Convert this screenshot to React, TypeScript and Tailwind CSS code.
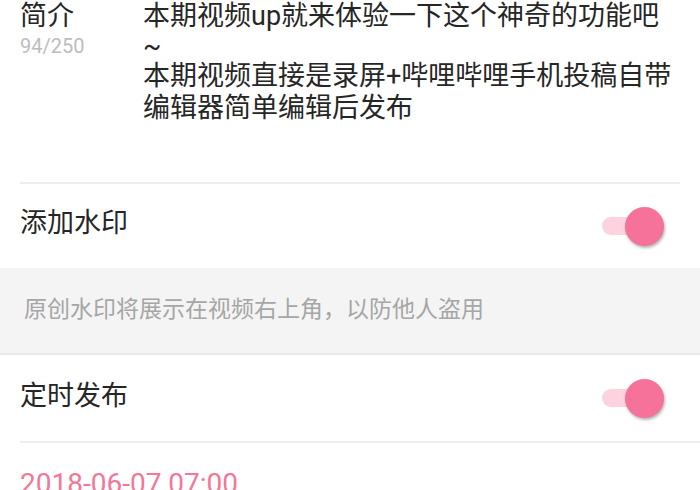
import React from "react";

const font = { fontFamily: 'Roboto, "Noto Sans CJK SC", sans-serif' };

function Toggle() {
  return (
    <div className="relative h-[40px] w-[64px] shrink-0">
      <div className="absolute left-[2px] top-[11px] h-[18px] w-[46px] rounded-full bg-[#fdd3df]" />
      <div className="absolute right-0 top-[1px] h-[39px] w-[39px] rounded-full bg-[#f7729a] shadow-[1px_2px_3px_rgba(0,0,0,0.3)]" />
    </div>
  );
}

export default function App() {
  return (
    <div className="h-[490px] w-[700px] overflow-hidden bg-white text-[#262626]" style={font}>
      {/* description section */}
      <div className="flex h-[182px] px-5">
        <div className="w-[123px] shrink-0">
          <div className="text-[27px] leading-[32px]">简介</div>
          <div className="text-[20px] leading-[28px] text-[#bdbdbd]">94/250</div>
        </div>
        <div className="flex-1 text-[27px]">
          <div className="leading-[32px]">本期视频up就来体验一下这个神奇的功能吧</div>
          <div className="leading-[28px]">~</div>
          <div className="leading-[32px]">本期视频直接是录屏+哔哩哔哩手机投稿自带</div>
          <div className="leading-[32px]">编辑器简单编辑后发布</div>
        </div>
      </div>
      <div className="mx-5 h-[2px] bg-[#eeeeee]" />

      {/* watermark row */}
      <div className="flex h-[84px] items-center justify-between pl-5 pr-[36px]">
        <div className="mb-[6px] text-[27px] leading-[32px]">添加水印</div>
        <Toggle />
      </div>
      <div className="flex h-[87px] items-center border-b-2 border-[#e8e8e8] bg-[#f4f4f4] pl-[24px]">
        <div className="mb-[2px] text-[23px] leading-[30px] text-[#a6a6a6]">
          原创水印将展示在视频右上角，以防他人盗用
        </div>
      </div>

      {/* schedule row */}
      <div className="flex h-[86px] items-center justify-between pl-5 pr-[36px]">
        <div className="mb-[4px] text-[27px] leading-[32px]">定时发布</div>
        <Toggle />
      </div>
      <div className="ml-5 h-[2px] bg-[#eeeeee]" />

      <div className="px-5 pt-[21px]">
        <div className="text-[28px] leading-[40px] text-[#f27799]">2018-06-07 07:00</div>
      </div>
    </div>
  );
}
